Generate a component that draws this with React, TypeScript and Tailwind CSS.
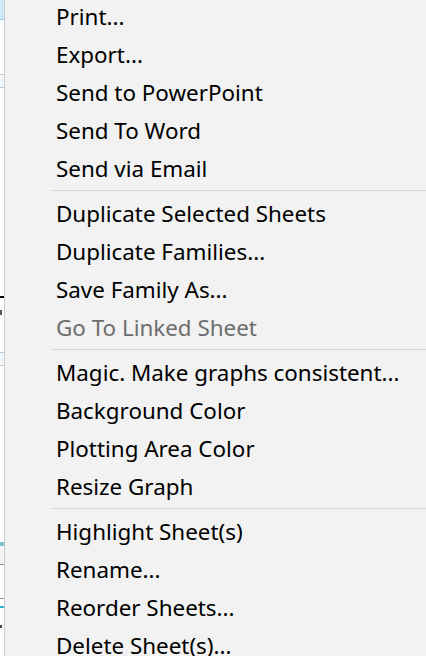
import React from "react";

type Item = { label: string; disabled?: boolean } | { separator: true };

const items: Item[] = [
    { label: "Print..." },
    { label: "Export..." },
    { label: "Send to PowerPoint" },
    { label: "Send To Word" },
    { label: "Send via Email" },
    { separator: true },
    { label: "Duplicate Selected Sheets" },
    { label: "Duplicate Families..." },
    { label: "Save Family As..." },
    { label: "Go To Linked Sheet", disabled: true },
    { separator: true },
    { label: "Magic. Make graphs consistent..." },
    { label: "Background Color" },
    { label: "Plotting Area Color" },
    { label: "Resize Graph" },
    { separator: true },
    { label: "Highlight Sheet(s)" },
    { label: "Rename..." },
    { label: "Reorder Sheets..." },
    { label: "Delete Sheet(s)..." },
];

/* strip of the window behind the menu */
function BehindStrip() {
    return (
        <div className="w-[4px] shrink-0 flex flex-col bg-white">
            <div className="h-[19px] bg-[#cde8f8]" />
            <div className="h-[1px] bg-[#8ccbee]" />
            <div className="h-[54px]" />
            <div className="h-[1px] bg-[#c8c8c8]" />
            <div className="h-[12px] bg-[#eef6fc]" />
            <div className="h-[1px] bg-[#c8c8c8]" />
            <div className="h-[208px]" />
            <div className="h-[2px] bg-black" />
            <div className="h-[12px]" />
            <div className="h-[5px] bg-[#555] w-[2px]" />
            <div className="h-[37px]" />
            <div className="h-[1px] bg-[#c8c8c8]" />
            <div className="h-[12px] bg-[#eef6fc]" />
            <div className="h-[1px] bg-[#c8c8c8]" />
            <div className="h-[176px]" />
            <div className="h-[4px] bg-[#7cc4c8]" />
            <div className="h-[18px] bg-[#f4f4f4]" />
            <div className="h-[1px] bg-[#909090]" />
            <div className="h-[33px]" />
            <div className="h-[1px] bg-[#909090]" />
            <div className="h-[7px]" />
            <div className="h-[2px] bg-[#2ab5d0]" />
            <div className="h-[17px]" />
            <div className="h-[3px] w-[2px] bg-[#444]" />
        </div>
    );
}

export default function App() {
    return (
        <div
            className="w-[426px] h-[656px] overflow-hidden flex bg-white"
            style={{ fontFamily: '"Noto Sans", "Open Sans", sans-serif' }}
        >
            <BehindStrip />
            <div className="flex-1 border-l border-[#cccccc] bg-[#f2f2f2]">
                <div className="-mt-[2px] flex flex-col">
                    {items.map((item, i) =>
                        "separator" in item ? (
                            <div key={i} className="h-[7px] pt-[2px] pl-[46px]">
                                <div className="h-[1px] bg-[#d4d4d4]" />
                            </div>
                        ) : (
                            <div
                                key={i}
                                className={
                                    "h-[38px] flex items-center pl-[51px] text-[22.4px] leading-none whitespace-nowrap " +
                                    (item.disabled ? "text-[#6d6d6d]" : "text-black")
                                }
                            >
                                {item.label}
                            </div>
                        )
                    )}
                </div>
            </div>
        </div>
    );
}
